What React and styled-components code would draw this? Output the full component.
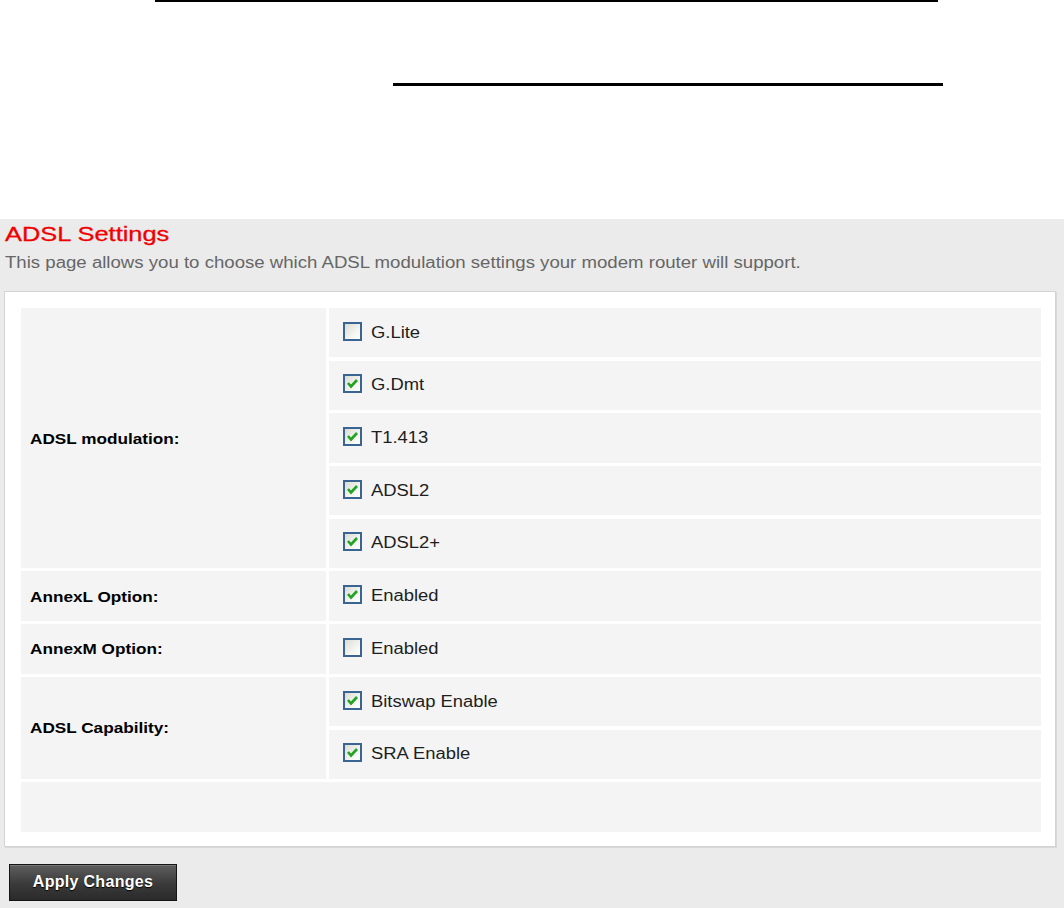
import styled, { createGlobalStyle } from 'styled-components';

const GlobalStyle = createGlobalStyle`
  html, body {
    margin: 0;
    padding: 0;
    background: #ffffff;
    font-family: "Liberation Sans", Arial, sans-serif;
  }
`

const Page = styled.div`
  width: 1064px;
  min-height: 908px;
  display: flex;
  flex-direction: column;
`

const Rule = styled.div`
  background: #000;
  height: ${props => props.thick}px;
  width: ${props => props.width}px;
  margin-left: ${props => props.left}px;
  margin-top: ${props => props.top}px;
`

// the screenshot is stretched sideways, so the text is too
const Wide = styled.span`
  display: inline-block;
  white-space: nowrap;
  transform: scaleX(${props => props.by || 1.16});
  transform-origin: left center;
`

const Panel = styled.div`
  flex: 1;
  margin-top: 133px;
  background: #ebebeb;
  padding: 3px 0 8px 0;
`

const Title = styled.h1`
  margin: 0 0 0 5px;
  font-size: 21px;
  line-height: 24px;
  font-weight: normal;
  color: #f00000;
  -webkit-text-stroke: 0.3px #f00000;
`

const Description = styled.p`
  margin: 8px 0 0 5px;
  font-size: 16px;
  line-height: 18px;
  color: #666;
`

const Box = styled.div`
  margin: 19px 0 0 4px;
  width: 1052px;
  box-sizing: border-box;
  background: #fff;
  border: 1px solid #d3d3d3;
  box-shadow: 1px 1px 0 #d9d9d9;
  padding: 16px 14px 14px 16px;
`

const Grid = styled.div`
  display: grid;
  grid-template-columns: 305px 1fr;
  grid-auto-rows: 49.4px;
  column-gap: 3px;
  row-gap: 3.3px;
`

const LabelCell = styled.div`
  grid-row: span ${props => props.span || 1};
  background: #f4f4f4;
  display: flex;
  align-items: center;
  padding-left: 9px;
  font-size: 15px;
  font-weight: bold;
  color: #000;
`

const OptionCell = styled.div`
  background: #f4f4f4;
  display: flex;
  align-items: center;
  gap: 9px;
  padding-left: 14px;
  font-size: 16px;
  color: #1e1e1e;
`

const EmptyRow = styled.div`
  grid-column: 1 / -1;
  background: #f4f4f4;
`

const Check = styled.span`
  width: 19px;
  height: 19px;
  box-sizing: border-box;
  border: 2px solid #3a6593;
  background: linear-gradient(135deg, #dcdcd4 0%, #f4f4f0 60%, #ffffff 100%);
  display: inline-flex;
  align-items: center;
  justify-content: center;
  margin-top: -3px;
  flex-shrink: 0;
`

const Button = styled.button`
  margin: 17px 0 0 9px;
  width: 168px;
  height: 37px;
  box-sizing: border-box;
  border: 1px solid #151515;
  background: linear-gradient(#5e5e5e, #3a3a3a 55%, #2a2a2a);
  box-shadow: inset 0 1px 0 #777;
  color: #fff;
  font-family: "Liberation Sans", Arial, sans-serif;
  font-size: 16px;
  font-weight: bold;
  letter-spacing: 0.3px;
  text-shadow: 0 1px 1px #000;
  cursor: pointer;
  padding: 0;
`

const Checkbox = ({ checked }) => (
  <Check>
    {checked && (
      <svg width="13" height="13" viewBox="0 0 13 13">
        <polyline points="2,6 5,9.5 11,3" fill="none" stroke="#21a421" strokeWidth="2.6" />
      </svg>
    )}
  </Check>
)

const Option = ({ checked, children }) => (
  <OptionCell>
    <Checkbox checked={checked} />
    <Wide by={1.15}>{children}</Wide>
  </OptionCell>
)

const Label = ({ span, children }) => (
  <LabelCell span={span}>
    <Wide by={1.145}>{children}</Wide>
  </LabelCell>
)

const App = () => {
  return (
    <Page>
      <GlobalStyle />
      <Rule thick={2} width={783} left={155} top={0} />
      <Rule thick={3} width={550} left={393} top={81} />
      <Panel>
        <Title><Wide by={1.21}>ADSL Settings</Wide></Title>
        <Description>
          <Wide by={1.163}>
            This page allows you to choose which ADSL modulation settings your modem router will support.
          </Wide>
        </Description>
        <Box>
          <Grid>
            <Label span={5}>ADSL modulation:</Label>
            <Option>G.Lite</Option>
            <Option checked>G.Dmt</Option>
            <Option checked>T1.413</Option>
            <Option checked>ADSL2</Option>
            <Option checked>ADSL2+</Option>

            <Label>AnnexL Option:</Label>
            <Option checked>Enabled</Option>

            <Label>AnnexM Option:</Label>
            <Option>Enabled</Option>

            <Label span={2}>ADSL Capability:</Label>
            <Option checked>Bitswap Enable</Option>
            <Option checked>SRA Enable</Option>

            <EmptyRow />
          </Grid>
        </Box>
        <Button>Apply Changes</Button>
      </Panel>
    </Page>
  )
}

export default App
